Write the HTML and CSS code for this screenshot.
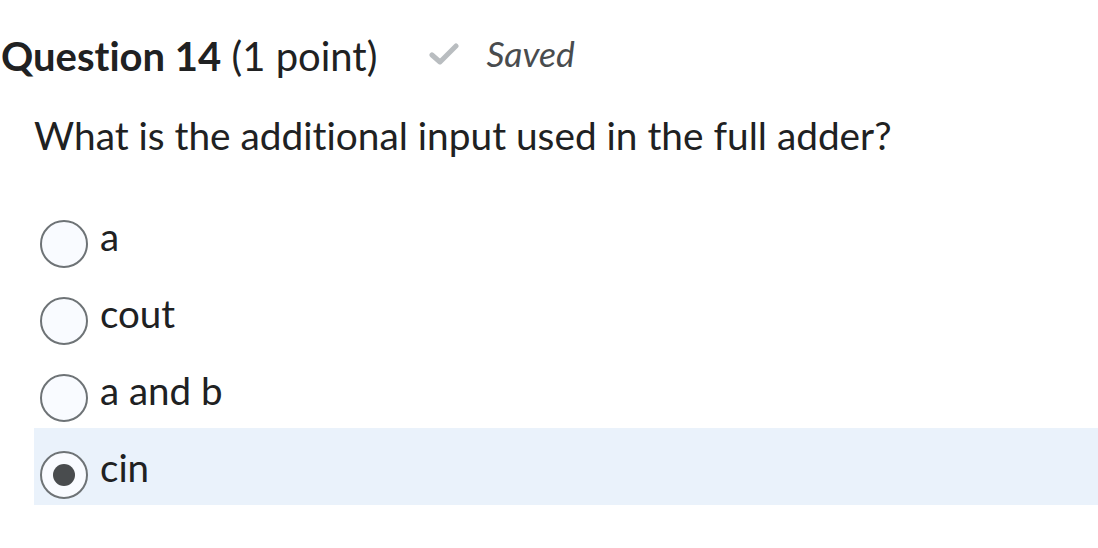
FILE: index.html
```html
<!DOCTYPE html>
<html>
<head>
<meta charset="utf-8">
<link rel="stylesheet" href="styles.css">
</head>
<body>
<div class="page">
  <div class="header">
    <h1 class="title"><strong>Question 14</strong> (1 point)</h1>
    <div class="status">
      <svg class="check" width="30" height="22" viewBox="0 0 30 22"><path d="M3 12 L11 19 L27 3" fill="none" stroke="#b9bdc0" stroke-width="5" stroke-linecap="round" stroke-linejoin="round"/></svg>
      <span class="saved">Saved</span>
    </div>
  </div>
  <div class="body">
    <p class="prompt">What is the additional input used in the full adder?</p>
    <div class="options">
      <label class="option"><span class="radio"></span><span class="label">a</span></label>
      <label class="option"><span class="radio"></span><span class="label">cout</span></label>
      <label class="option"><span class="radio"></span><span class="label">a and b</span></label>
      <label class="option selected"><span class="radio"><span class="dot"></span></span><span class="label">cin</span></label>
    </div>
  </div>
</div>
</body>
</html>
```
FILE: styles.css
```css
html, body {
  margin: 0;
  padding: 0;
  background: #ffffff;
}
body {
  font-family: Lato, "Noto Sans", sans-serif;
  color: #202122;
  font-variant-ligatures: none;
}
.page {
  width: 1098px;
}
.header {
  display: flex;
  align-items: center;
  padding-top: 32px;
  padding-left: 1px;
}
.title {
  margin: 0;
  font-size: 40px;
  font-weight: 400;
  line-height: 48px;
}
.title strong {
  font-weight: 700;
}
.status {
  display: flex;
  align-items: center;
  margin-left: 52px;
  gap: 27px;
  padding-bottom: 5px;
}
.saved {
  font-style: italic;
  font-size: 35.5px;
  line-height: 42px;
  color: #494c4e;
}
.body {
  padding-left: 34px;
}
.prompt {
  margin: 0;
  font-size: 38.8px;
  line-height: 46px;
  padding-top: 32px;
  padding-bottom: 39px;
}
.options {
  display: flex;
  flex-direction: column;
}
.option {
  display: flex;
  align-items: center;
  height: 77px;
  padding-top: 16px;
  box-sizing: border-box;
  padding-left: 6px;
}
.option.selected {
  background: #eaf2fb;
}
.radio {
  width: 44px;
  height: 44px;
  border: 2px solid #6e7376;
  border-radius: 50%;
  background: #f9fbff;
  display: flex;
  align-items: center;
  justify-content: center;
  flex: none;
}
.dot {
  width: 22px;
  height: 22px;
  border-radius: 50%;
  background: #494c4e;
}
.label {
  font-size: 38.5px;
  line-height: 46px;
  margin-left: 12px;
  padding-bottom: 16px;
}
```
